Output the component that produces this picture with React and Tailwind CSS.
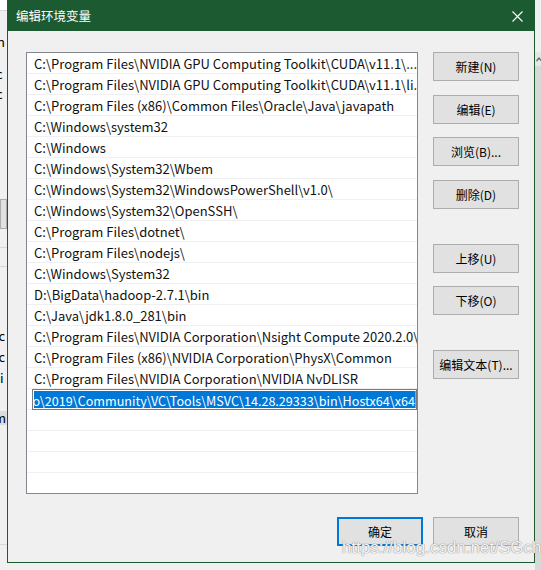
import React from "react";

const paths = [
  "C:\\Program Files\\NVIDIA GPU Computing Toolkit\\CUDA\\v11.1\\...",
  "C:\\Program Files\\NVIDIA GPU Computing Toolkit\\CUDA\\v11.1\\li...",
  "C:\\Program Files (x86)\\Common Files\\Oracle\\Java\\javapath",
  "C:\\Windows\\system32",
  "C:\\Windows",
  "C:\\Windows\\System32\\Wbem",
  "C:\\Windows\\System32\\WindowsPowerShell\\v1.0\\",
  "C:\\Windows\\System32\\OpenSSH\\",
  "C:\\Program Files\\dotnet\\",
  "C:\\Program Files\\nodejs\\",
  "C:\\Windows\\System32",
  "D:\\BigData\\hadoop-2.7.1\\bin",
  "C:\\Java\\jdk1.8.0_281\\bin",
  "C:\\Program Files\\NVIDIA Corporation\\Nsight Compute 2020.2.0\\",
  "C:\\Program Files (x86)\\NVIDIA Corporation\\PhysX\\Common",
  "C:\\Program Files\\NVIDIA Corporation\\NVIDIA NvDLISR",
];

const editing =
  "C:\\Program Files (x86)\\Microsoft Visual Studio\\2019\\Community\\VC\\Tools\\MSVC\\14.28.29333\\bin\\Hostx64\\x64";

const font = { fontFamily: '"Segoe UI", "Noto Sans CJK SC", sans-serif' };

function Btn({ children, primary, className = "" }) {
  return (
    <div
      className={`w-[86px] h-[29px] flex items-center justify-center bg-[#e1e1e1] text-[12px] text-black ${
        primary ? "border-2 border-[#0078d7]" : "border border-[#adadad]"
      } ${className}`}
    >
      {children}
    </div>
  );
}

export default function App() {
  return (
    <div className="w-[541px] h-[570px] bg-[#f0f0f0] flex overflow-hidden relative" style={font}>
      {/* window behind, left edge */}
      <div className="w-[7px] shrink-0 flex flex-col overflow-hidden text-[13px] text-black leading-none">
        <div className="h-[11px] bg-white border-b border-[#d9d9d9]"></div>
        <div className="h-[24px] bg-[#f0f0f0]"></div>
        <div className="h-[20px] whitespace-nowrap -ml-[3px]">h</div>
        <div className="h-[20px] whitespace-nowrap -ml-[4px] mt-[12px]">c</div>
        <div className="h-[20px] whitespace-nowrap -ml-[4px]">c</div>
        <div className="h-[30px] mt-[92px] border border-[#adadad] bg-[#e1e1e1]"></div>
        <div className="h-[19px] border-b border-[#d9d9d9]"></div>
        <div className="h-[19px] border-b border-[#d9d9d9]"></div>
        <div className="h-[62px]"></div>
        <div className="h-[21px] whitespace-nowrap -ml-[5px]">ic</div>
        <div className="h-[21px] whitespace-nowrap -ml-[5px]">ic</div>
        <div className="h-[40px] whitespace-nowrap -ml-[5px]">ti</div>
        <div className="h-[14px] bg-[#dcdcdc] whitespace-nowrap -ml-[6px]">m</div>
        <div className="h-[120px] border-b border-[#d9d9d9]"></div>
      </div>

      {/* dialog */}
      <div className="w-[528px] h-[563px] shrink-0 border border-[#1c5b32] flex flex-col bg-[#f0f0f0]">
        <div className="h-[30px] bg-[#1c5b32] flex items-center justify-between pl-[8px] pr-[11px]">
          <span className="text-[12.5px] text-white" style={{ fontFamily: '"Noto Sans CJK SC", sans-serif' }}>
            编辑环境变量
          </span>
          <svg width="11" height="11" viewBox="0 0 11 11">
            <path d="M0.5 0.5 L10.5 10.5 M10.5 0.5 L0.5 10.5" stroke="white" strokeWidth="1.1" />
          </svg>
        </div>

        <div className="flex-1 flex flex-col pt-[21px] pl-[18px] pr-[15px] pb-[16px]">
          <div className="flex gap-[15px]">
            <div className="w-[392px] h-[442px] bg-white border border-[#828790] flex flex-col overflow-hidden">
              {paths.map((p) => (
                <div
                  key={p}
                  className="h-[21px] shrink-0 border-b border-[#f0f0f0] flex items-center pl-[7px] pt-[2px] text-[13px] text-[#111] whitespace-nowrap overflow-hidden"
                >
                  {p}
                </div>
              ))}
              <div className="h-[21px] shrink-0 border-b border-[#f0f0f0] flex items-center pl-[5px]">
                <div className="w-full h-[21px] border border-[#7a7a7a] flex items-center pl-[1px]">
                  <div className="flex-1 h-[17px] overflow-hidden flex justify-end">
                    <span className="bg-[#0078d7] text-white text-[12.6px] leading-[17px] pt-[1px] whitespace-nowrap">
                      {editing}
                    </span>
                  </div>
                  <div className="w-[1px] h-[17px] bg-[#ff8c00]"></div>
                </div>
              </div>
              {[0, 1, 2, 3].map((i) => (
                <div key={i} className="h-[21px] shrink-0 border-b border-[#f0f0f0]"></div>
              ))}
            </div>

            <div className="flex flex-col" style={{ fontFamily: '"Noto Sans CJK SC", sans-serif' }}>
              <Btn className="mt-[0px]">新建(N)</Btn>
              <Btn className="mt-[14px]">编辑(E)</Btn>
              <Btn className="mt-[13px]">浏览(B)...</Btn>
              <Btn className="mt-[14px]">删除(D)</Btn>
              <Btn className="mt-[35px]">上移(U)</Btn>
              <Btn className="mt-[13px]">下移(O)</Btn>
              <Btn className="mt-[35px]">编辑文本(T)...</Btn>
            </div>
          </div>

          <div
            className="flex justify-end gap-[10px] mt-[23px]"
            style={{ fontFamily: '"Noto Sans CJK SC", sans-serif' }}
          >
            <Btn primary>确定</Btn>
            <Btn>取消</Btn>
          </div>
        </div>
      </div>

      {/* window behind, right edge */}
      <div className="flex-1 flex flex-col">
        <div className="h-[52px] bg-[#f0f0f0]"></div>
        <div className="h-[14px] bg-[#e6e6e6] flex items-center pl-[1px]">
          <svg width="6" height="5" viewBox="0 0 6 5">
            <path d="M0.5 4 L3 1 L5.5 4" stroke="#606060" strokeWidth="1.2" fill="none" />
          </svg>
        </div>
        <div className="flex-1 bg-[#d8d8d8]"></div>
      </div>

      {/* watermark */}
      <div
        className="absolute left-[342px] top-[535px] text-[17px] text-white/90 whitespace-nowrap"
        style={{ fontFamily: '"Liberation Sans", sans-serif', textShadow: "0 0 1px #8a8a8a, 0 0 1px #8a8a8a" }}
      >
        https://blog.csdn.net/SGchi
      </div>
    </div>
  );
}
